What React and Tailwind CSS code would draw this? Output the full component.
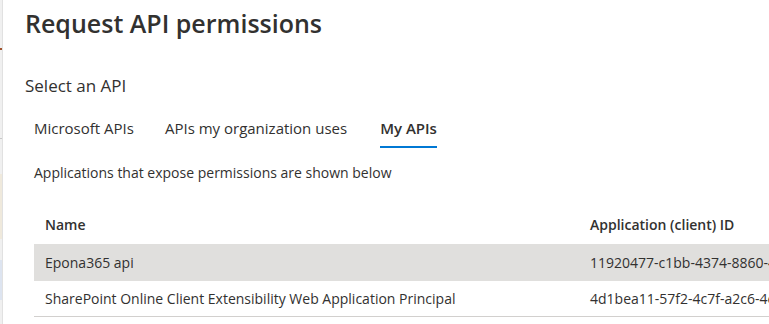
import React from "react";

const rows = [
  { name: "Epona365 api", id: "11920477-c1bb-4374-8860-4a2b9c1e7f35", selected: true },
  { name: "SharePoint Online Client Extensibility Web Application Principal", id: "4d1bea11-57f2-4c7f-a2c6-4e0b8d3f6a92" },
];

function EdgeStrip() {
  return (
    <div className="flex h-full w-[2px] shrink-0 flex-col bg-[#f0f0f0]">
      <div className="h-[48px]" />
      <div className="h-[2px] bg-[#a0522d]" />
      <div className="h-[88px]" />
      <div className="h-[1px] bg-[#c8c8c8]" />
      <div className="h-[35px]" />
      <div className="h-[65px] bg-[#efe9dc]" />
      <div className="h-[21px]" />
      <div className="h-[40px] bg-[#dde4f0]" />
      <div className="flex-1" />
    </div>
  );
}

export default function App() {
  return (
    <div
      className="flex h-[324px] w-[769px] overflow-hidden bg-white text-[#323130]"
      style={{ fontFamily: '"Open Sans", "Noto Sans", sans-serif' }}
    >
      <EdgeStrip />
      <div className="flex min-w-0 flex-1 flex-col border-l border-[#e1e1e1] pl-[22px]">
        <h1 className="mt-[7px] whitespace-nowrap text-[25px] leading-[32px] font-semibold">
          Request API permissions
        </h1>

        <p className="mt-[35px] text-[17px] leading-[24px]">Select an API</p>

        <div className="mt-[18px] flex pl-[9px] text-[15px] leading-[20px]">
          <button className="mr-[31px] pb-[10px] pt-[2px]">Microsoft APIs</button>
          <button className="mr-[33px] pb-[10px] pt-[2px]">APIs my organization uses</button>
          <button className="relative pb-[10px] pt-[2px] font-semibold">
            My APIs
            <span className="absolute bottom-0 left-0 right-0 h-[2px] bg-[#0078d4]" />
          </button>
        </div>

        <p className="mt-[15px] pl-[9px] text-[14px] leading-[20px]">
          Applications that expose permissions are shown below
        </p>

        <div className="mt-[21px] ml-[9px] text-[14px]">
          <div className="flex h-[40px] items-center font-semibold">
            <div className="w-[556px] shrink-0 pl-[11px]">Name</div>
            <div className="whitespace-nowrap">Application (client) ID</div>
          </div>
          {rows.map((r) => (
            <div
              key={r.id}
              className={
                "flex items-center whitespace-nowrap " +
                (r.selected ? "h-[37px] bg-[#e0dfdd]" : "h-[36px] border-b border-[#d2d0ce] bg-white")
              }
            >
              <div className="w-[556px] shrink-0 pl-[11px]">{r.name}</div>
              <div>{r.id}</div>
            </div>
          ))}
        </div>
      </div>
    </div>
  );
}
